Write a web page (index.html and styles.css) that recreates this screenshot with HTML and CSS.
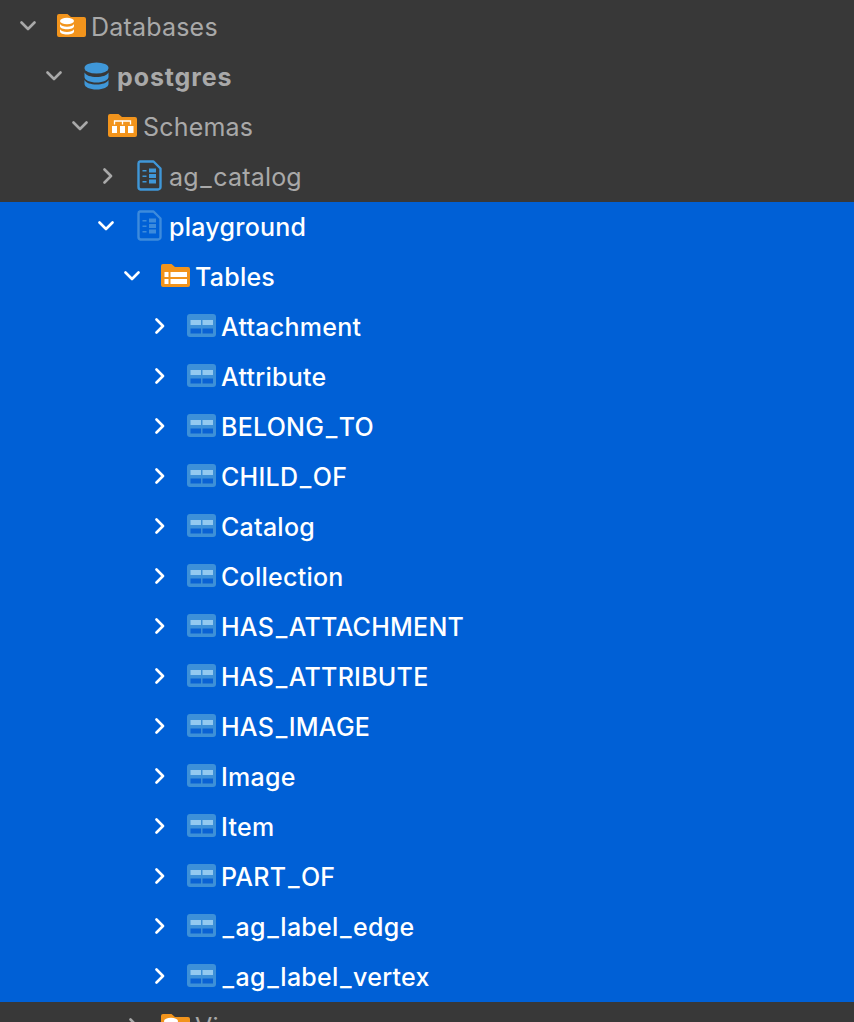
FILE: index.html
```html
<!DOCTYPE html>
<html lang="en">
<head>
<meta charset="utf-8">
<title>Database tree</title>
<link rel="stylesheet" href="styles.css">
</head>
<body>
<svg class="defs" width="0" height="0" aria-hidden="true">
  <symbol id="chev-down" viewBox="0 0 16 10"><path d="M1.5 1.5 8 8l6.5-6.5" fill="none" stroke="currentColor" stroke-width="2.600" stroke-linecap="round" stroke-linejoin="round"/></symbol>
  <symbol id="chev-right" viewBox="0 0 10 16"><path d="M1.5 1.5 8 8l-6.5 6.5" fill="none" stroke="currentColor" stroke-width="2.600" stroke-linecap="round" stroke-linejoin="round"/></symbol>
  <symbol id="folder" viewBox="0 0 29 23"><path d="M0 2a2 2 0 0 1 2-2h8.500l3.500 3h13a2 2 0 0 1 2 2v16a2 2 0 0 1-2 2H2a2 2 0 0 1-2-2z" fill="#f2941c"/></symbol>
  <symbol id="folder-db" viewBox="0 0 29 23"><use href="#folder"/><g fill="#fff"><ellipse cx="10" cy="7" rx="7" ry="3.200"/><path d="M3 10c1 1.800 3.800 2.700 7 2.700s6-.9 7-2.700v2.200c0 1.700-3.200 3-7 3s-7-1.300-7-3z"/><path d="M3 15.300c1 1.800 3.800 2.700 7 2.700s6-.9 7-2.700v2.200c0 1.700-3.200 3-7 3s-7-1.300-7-3z"/></g></symbol>
  <symbol id="folder-schema" viewBox="0 0 29 23"><use href="#folder"/><path d="M6.500 10.500V7h16v3.500M14.500 7v3.500" fill="none" stroke="#fff" stroke-width="1.300"/><g fill="#fff"><rect x="4" y="12" width="5" height="7"/><rect x="12" y="12" width="5" height="7"/><rect x="20" y="12" width="5.500" height="7"/></g></symbol>
  <symbol id="folder-table" viewBox="0 0 29 23"><use href="#folder"/><g fill="#fff"><rect x="3.500" y="8" width="4" height="5"/><rect x="3.500" y="15" width="4" height="5"/><rect x="9.500" y="8" width="16.500" height="5"/><rect x="9.500" y="15" width="16.500" height="5"/></g></symbol>
  <symbol id="database" viewBox="0 0 25 28"><g fill="#3f97d8"><ellipse cx="12.500" cy="6" rx="12" ry="5.600"/><path d="M.5 10.500c1.700 3 6.200 4.500 12 4.500s10.300-1.500 12-4.500v4.500c0 3-5.400 5.500-12 5.500S.5 18 .5 15z"/><path d="M.5 18c1.700 3 6.200 4.500 12 4.500s10.300-1.500 12-4.500v4c0 3-5.400 5.500-12 5.500S.5 25 .5 22z"/></g></symbol>
  <symbol id="schema" viewBox="0 0 25 31"><path class="schema-line" d="M3 1.500h13.500l7 7V27a2.500 2.500 0 0 1-2.500 2.500H3.500A2.500 2.500 0 0 1 1.500 27V3.500a2 2 0 0 1 1.500-2z" fill="none" stroke-width="2.400" stroke-linejoin="round"/><g class="schema-mark"><rect x="5.500" y="10" width="4" height="1.500"/><rect x="5.500" y="15.500" width="4" height="1.500"/><rect x="5.500" y="21" width="4" height="1.500"/><rect x="12" y="8.500" width="7" height="4"/><rect x="12" y="14" width="7" height="4"/><rect x="12" y="19.500" width="7" height="4"/></g></symbol>
  <symbol id="table" viewBox="0 0 29 23"><rect width="29" height="23" rx="3" fill="#3d90d8"/><g fill="#93c9f0"><rect x="3.500" y="6" width="10.500" height="5"/><rect x="15.500" y="6" width="10.500" height="5"/></g><g fill="#0a62d4"><rect x="3.500" y="14.500" width="10.500" height="5"/><rect x="15.500" y="14.500" width="10.500" height="5"/></g></symbol>
</svg>

<main class="tree">
  <div class="row lv0"><svg class="chev"><use href="#chev-down"/></svg><svg class="icon wide"><use href="#folder-db"/></svg><span class="label">Databases</span></div>
  <div class="row lv1"><svg class="chev"><use href="#chev-down"/></svg><svg class="icon narrow db"><use href="#database"/></svg><span class="label bold">postgres</span></div>
  <div class="row lv2"><svg class="chev"><use href="#chev-down"/></svg><svg class="icon wide"><use href="#folder-schema"/></svg><span class="label">Schemas</span></div>
  <div class="row lv3"><svg class="chev side"><use href="#chev-right"/></svg><svg class="icon narrow doc"><use href="#schema"/></svg><span class="label">ag<span class="us">_</span>catalog</span></div>
  <div class="selection">
    <div class="row lv3"><svg class="chev"><use href="#chev-down"/></svg><svg class="icon narrow doc"><use href="#schema"/></svg><span class="label">playground</span></div>
    <div class="row lv4"><svg class="chev"><use href="#chev-down"/></svg><svg class="icon wide"><use href="#folder-table"/></svg><span class="label">Tables</span></div>
    <div class="row lv5"><svg class="chev side"><use href="#chev-right"/></svg><svg class="icon wide"><use href="#table"/></svg><span class="label">Attachment</span></div>
    <div class="row lv5"><svg class="chev side"><use href="#chev-right"/></svg><svg class="icon wide"><use href="#table"/></svg><span class="label">Attribute</span></div>
    <div class="row lv5"><svg class="chev side"><use href="#chev-right"/></svg><svg class="icon wide"><use href="#table"/></svg><span class="label">BELONG<span class="us">_</span>TO</span></div>
    <div class="row lv5"><svg class="chev side"><use href="#chev-right"/></svg><svg class="icon wide"><use href="#table"/></svg><span class="label">CHILD<span class="us">_</span>OF</span></div>
    <div class="row lv5"><svg class="chev side"><use href="#chev-right"/></svg><svg class="icon wide"><use href="#table"/></svg><span class="label">Catalog</span></div>
    <div class="row lv5"><svg class="chev side"><use href="#chev-right"/></svg><svg class="icon wide"><use href="#table"/></svg><span class="label">Collection</span></div>
    <div class="row lv5"><svg class="chev side"><use href="#chev-right"/></svg><svg class="icon wide"><use href="#table"/></svg><span class="label">HAS<span class="us">_</span>ATTACHMENT</span></div>
    <div class="row lv5"><svg class="chev side"><use href="#chev-right"/></svg><svg class="icon wide"><use href="#table"/></svg><span class="label">HAS<span class="us">_</span>ATTRIBUTE</span></div>
    <div class="row lv5"><svg class="chev side"><use href="#chev-right"/></svg><svg class="icon wide"><use href="#table"/></svg><span class="label">HAS<span class="us">_</span>IMAGE</span></div>
    <div class="row lv5"><svg class="chev side"><use href="#chev-right"/></svg><svg class="icon wide"><use href="#table"/></svg><span class="label">Image</span></div>
    <div class="row lv5"><svg class="chev side"><use href="#chev-right"/></svg><svg class="icon wide"><use href="#table"/></svg><span class="label">Item</span></div>
    <div class="row lv5"><svg class="chev side"><use href="#chev-right"/></svg><svg class="icon wide"><use href="#table"/></svg><span class="label">PART<span class="us">_</span>OF</span></div>
    <div class="row lv5"><svg class="chev side"><use href="#chev-right"/></svg><svg class="icon wide"><use href="#table"/></svg><span class="label"><span class="us">_</span>ag<span class="us">_</span>label<span class="us">_</span>edge</span></div>
    <div class="row lv5"><svg class="chev side"><use href="#chev-right"/></svg><svg class="icon wide"><use href="#table"/></svg><span class="label"><span class="us">_</span>ag<span class="us">_</span>label<span class="us">_</span>vertex</span></div>
  </div>
  <div class="row lv4"><svg class="chev side"><use href="#chev-right"/></svg><svg class="icon wide"><use href="#folder-db"/></svg><span class="label">Views</span></div>
</main>
</body>
</html>
```

FILE: styles.css
```css
html, body {
  margin: 0;
  height: 1022px;
  overflow: hidden;
  background: #383838;
}

.defs {
  position: absolute;
}

.tree {
  padding-top: 2px;
  font-family: Inter, "Liberation Sans", sans-serif;
  font-size: 25px;
  letter-spacing: 0.2px;
  color: #a9a9a9;
  --doc-line: #3f97d8;
}

.selection {
  background: #0060d6;
  color: #fff;
  font-weight: 500;
  letter-spacing: 0.25px;
  --doc-line: #3d8bdc;
}

.schema-line {
  stroke: var(--doc-line);
}

.schema-mark {
  fill: var(--doc-line);
}

.row {
  display: flex;
  align-items: center;
  height: 50px;
  white-space: nowrap;
}

.lv0 { padding-left: 20px; }
.lv1 { padding-left: 46px; }
.lv2 { padding-left: 72px; }
.lv3 { padding-left: 98px; }
.lv4 { padding-left: 124px; }
.lv5 { padding-left: 150px; }

.chev {
  flex: none;
  width: 16px;
  height: 10px;
  margin-bottom: 2px;
}

.chev.side {
  width: 10px;
  height: 16px;
  margin-left: 5px;
  margin-right: 1px;
}

.icon {
  flex: none;
  margin-left: 21px;
  margin-bottom: 3px;
}

.wide {
  width: 29px;
  height: 23px;
  margin-right: 5px;
}

.lv2 .icon {
  margin-left: 20px;
  margin-right: 6px;
}

.narrow {
  width: 25px;
  height: 31px;
  margin-right: 7px;
}

.db {
  height: 28px;
  margin-left: 22px;
  margin-right: 8px;
}

.doc {
  margin-left: 23px;
}

.bold {
  font-weight: 700;
  letter-spacing: 0.9px;
}

.us {
  margin-left: 1.5px;
  letter-spacing: 1.5px;
}
```
